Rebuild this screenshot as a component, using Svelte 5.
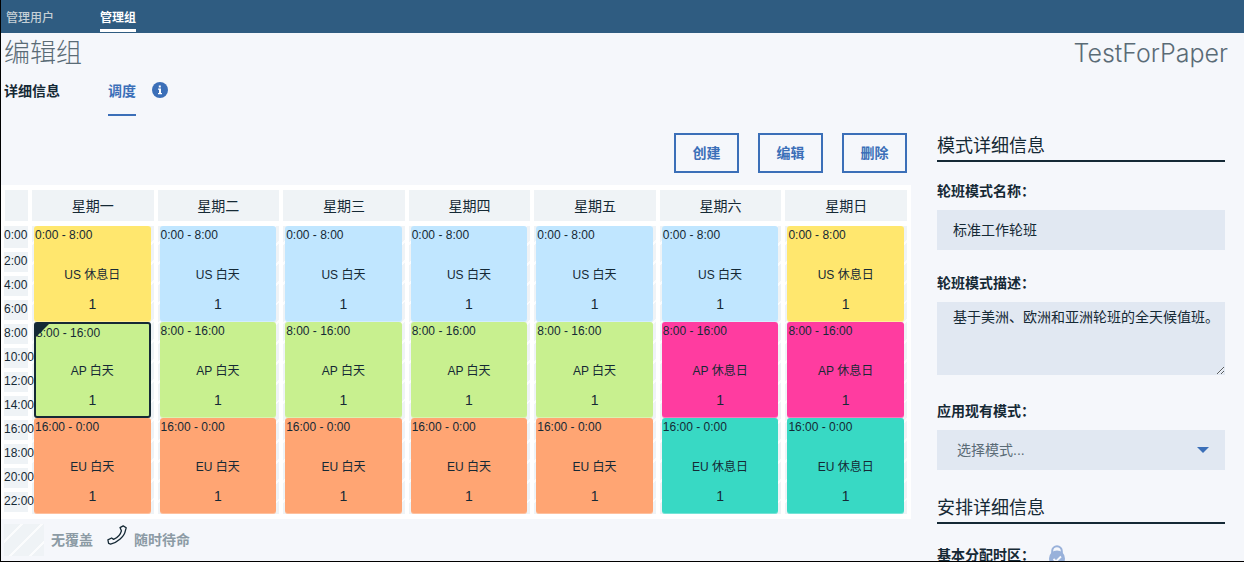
<script>
  const days = ['星期一', '星期二', '星期三', '星期四', '星期五', '星期六', '星期日'];
  const hours = Array.from({ length: 12 }, (_, i) => `${i * 2}:00`);
  const US_OFF = { time: '0:00 - 8:00', name: 'US 休息日', tone: 'yellow' };
  const US_DAY = { time: '0:00 - 8:00', name: 'US 白天', tone: 'blue' };
  const AP_DAY = { time: '8:00 - 16:00', name: 'AP 白天', tone: 'green' };
  const AP_OFF = { time: '8:00 - 16:00', name: 'AP 休息日', tone: 'pink' };
  const EU_DAY = { time: '16:00 - 0:00', name: 'EU 白天', tone: 'orange' };
  const EU_OFF = { time: '16:00 - 0:00', name: 'EU 休息日', tone: 'teal' };
  const schedule = [
    [US_OFF, AP_DAY, EU_DAY],
    [US_DAY, AP_DAY, EU_DAY],
    [US_DAY, AP_DAY, EU_DAY],
    [US_DAY, AP_DAY, EU_DAY],
    [US_DAY, AP_DAY, EU_DAY],
    [US_DAY, AP_OFF, EU_OFF],
    [US_OFF, AP_OFF, EU_OFF]
  ];
  let selected = $state('0-1');
  let patternName = $state('标准工作轮班');
  let patternText = $state('基于美洲、欧洲和亚洲轮班的全天候值班。');
</script>

<div class="page">
  <nav class="topnav">
    <a href="#users">管理用户</a>
    <a href="#groups" class="active">管理组</a>
  </nav>

  <header class="title">
    <h1>编辑组</h1>
    <span class="group">TestForPaper</span>
  </header>

  <nav class="tabs">
    <a href="#details">详细信息</a>
    <a href="#schedule" class="active">调度</a>
    <svg class="info" viewBox="0 0 16 16" aria-hidden="true">
      <circle cx="8" cy="8" r="8" fill="#3b6fb8" />
      <path d="M6.8 3.4h2v2h-2zM6 6.6h3v4.4h1v1.2H6V11h1V7.8H6z" fill="#fff" />
    </svg>
  </nav>

  <div class="body">
    <main>
      <div class="actions">
        <button>创建</button>
        <button>编辑</button>
        <button>删除</button>
      </div>

      <table>
        <thead>
          <tr>
            <th class="timecol"></th>
            {#each days as day}<th>{day}</th>{/each}
          </tr>
        </thead>
        <tbody>
          <tr>
            <td>
              <div class="hours">
                {#each hours as hour}<span>{hour}</span>{/each}
              </div>
            </td>
            {#each schedule as shifts, d}
              <td class="day hatch">
                {#each shifts as shift, s}
                  <button
                    class="shift {shift.tone}"
                    class:selected={selected === `${d}-${s}`}
                    onclick={() => (selected = `${d}-${s}`)}
                  >
                    <span class="range">{shift.time}</span>
                    <span class="name">{shift.name}</span>
                    <span class="count">1</span>
                  </button>
                {/each}
              </td>
            {/each}
          </tr>
        </tbody>
      </table>

      <div class="legend">
        <span class="swatch hatch"></span>
        <span>无覆盖</span>
        <svg class="phone" viewBox="0 0 20 20" aria-hidden="true">
          <path
            d="M13 2.6 16.2 .9 19.2 2.8 18.4 5.6C17.4 11.6 10.4 17.6 3.6 19.1L1.6 18.4 .9 14.8 4.6 13 6.6 14.4C10.2 12.8 13.6 9.2 14.4 5.8Z"
            fill="none" stroke="#152935" stroke-width="1.3" stroke-linejoin="round"
          />
        </svg>
        <span>随时待命</span>
      </div>
    </main>

    <aside>
      <h2>模式详细信息</h2>
      <div class="field">
        <label for="pname">轮班模式名称：</label>
        <input id="pname" type="text" bind:value={patternName} />
      </div>
      <div class="field">
        <label for="pdesc">轮班模式描述：</label>
        <div class="area"><textarea id="pdesc" bind:value={patternText}></textarea></div>
      </div>
      <div class="field">
        <label for="pexist">应用现有模式：</label>
        <div class="select">
          <select id="pexist"><option>选择模式...</option></select>
          <svg viewBox="0 0 12 6" aria-hidden="true"><path d="M0 0h12L6 6z" fill="#3b6fb8" /></svg>
        </div>
      </div>
      <h2 class="second">安排详细信息</h2>
      <div class="zone">
        <span>基本分配时区：</span>
        <svg viewBox="0 0 16 20" aria-hidden="true">
          <path d="M3.2 9V6a4.8 4.8 0 0 1 9.6 0v3" fill="none" stroke="#98b1da" stroke-width="2" />
          <circle cx="8" cy="13.5" r="8" fill="#98b1da" />
          <path d="M4.5 14l2.5 2.5 5-5" fill="none" stroke="#f5f7fb" stroke-width="1.8" />
        </svg>
      </div>
    </aside>
  </div>
</div>

<style>
  :global(body) {
    margin: 0;
    background: #f5f7fb;
  }
  .page {
    box-sizing: border-box;
    height: 100vh;
    overflow: hidden;
    border-left: 1px solid #000;
    border-bottom: 1px solid #000;
    background: #f5f7fb;
    color: #152935;
    font-family: 'Liberation Sans', 'Noto Sans CJK SC', sans-serif;
    font-size: 14px;
    line-height: 20px;
  }
  a {
    color: inherit;
    text-decoration: none;
  }
  button,
  input,
  textarea,
  select {
    font: inherit;
    color: inherit;
    margin: 0;
    border: 0;
    border-radius: 0;
    box-sizing: border-box;
  }
  .topnav {
    display: flex;
    gap: 46px;
    height: 33px;
    padding-left: 5px;
    background: #2f5c81;
    color: #c5d0d6;
    font-size: 12px;
    font-weight: 500;
  }
  .topnav a {
    box-sizing: border-box;
    height: 32px;
    padding-top: 8px;
  }
  .topnav .active {
    color: #fff;
    font-weight: 700;
    border-bottom: 3px solid #fff;
  }
  .title {
    display: flex;
    justify-content: space-between;
    align-items: center;
    height: 40px;
    padding: 0 16px 0 3px;
    color: #5a6b76;
  }
  h1 {
    margin: 0;
    font-size: 26px;
    font-weight: 300;
    line-height: 40px;
  }
  .group {
    font-family: Inter, 'Liberation Sans', sans-serif;
    font-size: 25px;
    font-weight: 300;
  }
  .tabs {
    display: flex;
    height: 43px;
    padding-left: 3px;
    font-weight: 700;
  }
  .tabs a {
    box-sizing: border-box;
    height: 43px;
    padding-top: 8px;
    margin-right: 48px;
  }
  .tabs .active {
    margin-right: 16px;
    color: #3b6fb8;
    border-bottom: 2px solid #3b6fb8;
  }
  .info {
    width: 16px;
    height: 16px;
    margin-top: 9px;
  }
  .body {
    display: flex;
    gap: 26px;
    padding-right: 19px;
  }
  main {
    flex: 1;
    min-width: 0;
    padding-top: 17px;
  }
  .actions {
    display: flex;
    justify-content: flex-end;
    gap: 19px;
    padding-right: 4px;
    margin-bottom: 12px;
  }
  .actions button {
    width: 65px;
    height: 40px;
    padding: 0;
    background: transparent;
    border: 2px solid #3b6fb8;
    color: #3b6fb8;
    font-weight: 700;
  }
  table {
    width: 100%;
    table-layout: fixed;
    border-collapse: separate;
    border-spacing: 4px 5px;
    background: #fff;
  }
  th,
  td {
    padding: 0;
  }
  th {
    height: 31px;
    background: #eff3f6;
    font-weight: 400;
  }
  .timecol {
    width: 23px;
  }
  td {
    vertical-align: top;
  }
  .hours {
    display: flex;
    flex-direction: column;
    gap: 4px;
    margin-left: -1px;
    font-size: 12px;
    line-height: 18px;
  }
  .hours span {
    height: 20px;
    background: #eff3f6;
    white-space: nowrap;
  }
  .hours span:first-child {
    height: 22px;
  }
  .hatch {
    background: repeating-linear-gradient(135deg, #eff3f6 0 12px, #fbfcfd 12px 14px);
  }
  .day {
    padding: 0 3px 0 2px;
  }
  .shift {
    position: relative;
    z-index: 1;
    display: flex;
    flex-direction: column;
    width: 100%;
    height: 96px;
    padding: 0 1px;
    border-radius: 3px;
    font-size: 12px;
    text-align: left;
    box-shadow: inset 0 -1px rgba(255, 255, 255, 0.3);
  }
  .range {
    line-height: 18px;
  }
  .name {
    margin-top: 21px;
    line-height: 20px;
    text-align: center;
  }
  .count {
    margin-top: 9px;
    font-size: 14px;
    line-height: 20px;
    text-align: center;
  }
  .selected {
    padding: 0;
    border: 2px solid #152935;
    box-shadow: none;
  }
  .selected .name {
    margin-top: 19px;
  }
  .selected::before {
    content: '';
    position: absolute;
    top: 0;
    left: 0;
    border-top: 13px solid #152935;
    border-right: 13px solid transparent;
  }
  .yellow { background: #ffe76e; }
  .blue { background: #c0e6ff; }
  .green { background: #c8f08f; }
  .orange { background: #ffa573; }
  .pink { background: #ff3ca0; }
  .teal { background: #38d9c4; }
  .legend {
    display: flex;
    align-items: center;
    height: 41px;
    padding-left: 3px;
    color: #8c9ba5;
    font-weight: 700;
  }
  .swatch {
    width: 40px;
    height: 32px;
    margin-right: 7px;
  }
  .phone {
    width: 20px;
    height: 20px;
    margin: 0 7px 10px 14px;
  }
  aside {
    width: 288px;
    flex: none;
    padding-top: 12px;
  }
  h2 {
    margin: 0 0 19px;
    padding-top: 4px;
    border-bottom: 2px solid #152935;
    font-size: 18px;
    font-weight: 400;
    line-height: 28px;
  }
  .field {
    margin-bottom: 23px;
  }
  label {
    display: block;
    margin-bottom: 9px;
    font-weight: 700;
  }
  input,
  select,
  textarea {
    display: block;
    width: 100%;
    height: 40px;
    padding: 0 16px;
    background: #e1e8f2;
  }
  input {
    padding-bottom: 2px;
  }
  .area {
    height: 76px;
  }
  textarea {
    height: 73px;
    padding: 5px 4px 5px 16px;
    overflow: hidden;
  }
  .select {
    position: relative;
  }
  select {
    appearance: none;
    padding-left: 20px;
    color: #5a6b76;
  }
  .select svg {
    position: absolute;
    right: 16px;
    top: 17px;
    width: 12px;
    height: 6px;
  }
  .second {
    margin-top: -3px;
  }
  .zone {
    display: flex;
    align-items: center;
    gap: 14px;
    height: 24px;
    font-weight: 700;
  }
  .zone svg {
    width: 16px;
    height: 20px;
  }
</style>
